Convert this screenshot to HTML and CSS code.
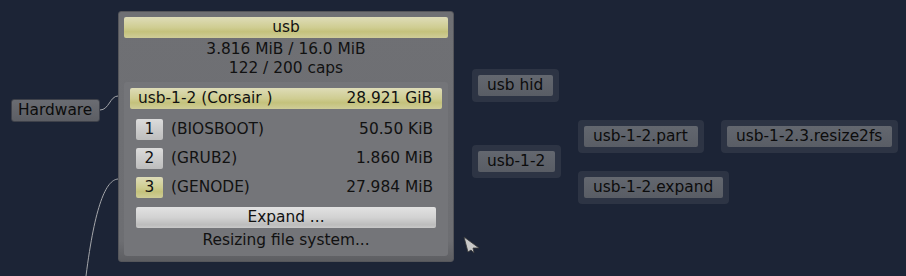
FILE: index.html
```html
<!DOCTYPE html>
<html lang="en">
<head>
  <meta charset="UTF-8">
  <title>Sculpt graph</title>
  <link rel="stylesheet" href="styles.css">
</head>
<body>
  <div class="canvas">
    <svg class="wires" width="906" height="276" viewBox="0 0 906 276">
      <path d="M100 110 C 109 110, 110 96, 118 96" />
      <path d="M118 179 C 106 180, 95 205, 86 276" />
    </svg>

    <div class="node hw"><span class="box">Hardware</span></div>
    <div class="node n-hid"><span class="box">usb hid</span></div>
    <div class="node n-usb12"><span class="box">usb-1-2</span></div>
    <div class="node n-part"><span class="box">usb-1-2.part</span></div>
    <div class="node n-resize"><span class="box">usb-1-2.3.resize2fs</span></div>
    <div class="node n-expand"><span class="box">usb-1-2.expand</span></div>

    <div class="panel">
      <div class="title">usb</div>
      <div class="stats">
        <div>3.816 MiB / 16.0 MiB</div>
        <div>122 / 200 caps</div>
      </div>
      <div class="frame">
        <div class="device">
          <span>usb-1-2 (Corsair )</span>
          <span>28.921 GiB</span>
        </div>
        <div class="parts">
          <div class="part">
            <span class="num">1</span>
            <span class="pname">(BIOSBOOT)</span>
            <span class="psize">50.50 KiB</span>
          </div>
          <div class="part">
            <span class="num">2</span>
            <span class="pname">(GRUB2)</span>
            <span class="psize">1.860 MiB</span>
          </div>
          <div class="part">
            <span class="num sel">3</span>
            <span class="pname">(GENODE)</span>
            <span class="psize">27.984 MiB</span>
          </div>
        </div>
        <div class="button">Expand ...</div>
        <div class="status">Resizing file system...</div>
      </div>
    </div>

    <svg class="pointer" width="20" height="20" viewBox="0 0 20 20">
      <path d="M1 1 L16 12 L10 12 L11 17 L8 14 L5 16 Z" />
    </svg>
  </div>
</body>
</html>
```

FILE: styles.css
```css
html, body { margin: 0; padding: 0; }
body { background: #1c2436; font-family: "DejaVu Sans", sans-serif; font-size: 15.4px; color: #111; }

.canvas { position: relative; width: 906px; height: 276px; overflow: hidden; }

.wires { position: absolute; left: 0; top: 0; }
.wires path { fill: none; stroke: #a4a6aa; stroke-width: 1; }

/* graph nodes */
.node { position: absolute; padding: 6px; background: rgba(62, 68, 82, 0.5); border-radius: 4px; }
.node .box { display: block; height: 21px; line-height: 21px; padding: 0 10px 0 9px; background: linear-gradient(#63676f, #595d65); border-radius: 2px; color: #0c0c0c; white-space: nowrap; }
.hw { left: 5px; top: 93px; background: transparent; padding: 6px; }
.hw .box { height: 21px; line-height: 21px; padding: 0 7px 0 6px; border: 1px solid #3e414a; background: linear-gradient(#6a6c72, #5c5e64); border-radius: 3px; }
.n-hid { left: 472px; top: 69px; }
.n-usb12 { left: 472px; top: 145px; }
.n-part { left: 578px; top: 120px; }
.n-resize { left: 721px; top: 120px; }
.n-expand { left: 578px; top: 171px; }

/* dialog panel */
.panel { position: absolute; left: 118px; top: 11px; width: 336px; height: 251px; box-sizing: border-box; padding: 6px; border-radius: 3px; background: linear-gradient(#6f7074 0%, #6d6e72 92%, #5d5e62 100%); border: 1px solid #55565b; display: flex; flex-direction: column; }
.panel .title { height: 21px; line-height: 21px; text-align: center; border-radius: 2px; background: linear-gradient(#dedcb8, #cfcd92 50%, #c4c27c 70%, #cfcd98); margin: -1px -1px 2px -1px; }
.stats { text-align: center; line-height: 19px; margin-bottom: 4px; }
.frame { margin: 0 -1px; flex: 1; padding: 6px 6px 6px; border-radius: 3px; background: #747579; display: flex; flex-direction: column; }
.device { height: 21px; line-height: 21px; display: flex; justify-content: space-between; padding: 0 10px 0 8px; border-radius: 2px; background: linear-gradient(#dedcb8, #cfcd92 50%, #c4c27c 70%, #cfcd98); }
.parts { margin: 10px 6px 0; display: flex; flex-direction: column; gap: 8px; }
.part { height: 21px; line-height: 21px; display: flex; align-items: center; padding-right: 3px; }
.num { width: 27px; height: 21px; text-align: center; border-radius: 2px; background: linear-gradient(#dcdcdc, #c9c9c9 60%, #bdbdbd); }
.num.sel { background: linear-gradient(#dedcb8, #cfcd92 50%, #c4c27c 70%, #cfcd98); }
.pname { margin-left: 8px; flex: 1; }
.psize { text-align: right; }
.button { margin: 9px 6px 0; height: 21px; line-height: 21px; text-align: center; border-radius: 2px; background: linear-gradient(#e2e2e2, #d2d2d2 50%, #bcbcbc 85%, #c8c8c8); }
.status { text-align: center; line-height: 20px; margin-top: 2px; }

.pointer { position: absolute; left: 463px; top: 236px; }
.pointer path { fill: #c8c8c8; stroke: #3a3a3a; stroke-width: 0.8; }
```
